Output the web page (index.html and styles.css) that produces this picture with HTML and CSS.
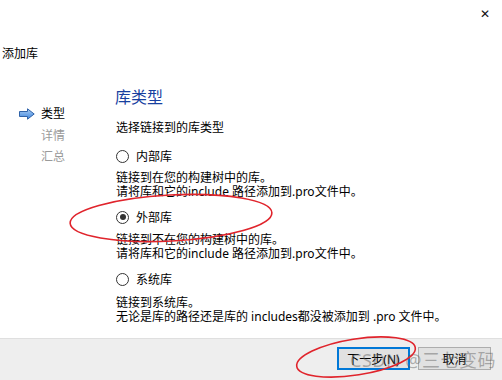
FILE: index.html
```html
<!DOCTYPE html>
<html lang="zh">
<head>
    <meta charset="UTF-8">
    <title>添加库</title>
    <link rel="stylesheet" href="styles.css">
</head>
<body>
    <div class="window">
        <div class="titlebar">
            <span class="close">&#x2715;</span>
        </div>
        <div class="dlg-title">添加库</div>

        <div class="main">
            <ul class="steps">
                <li class="current">
                    <svg class="arrow" width="16" height="12" viewBox="0 0 16 12">
                        <defs>
                            <linearGradient id="ag" x1="0" y1="0" x2="0" y2="1">
                                <stop offset="0" stop-color="#a9cdf5"/>
                                <stop offset="1" stop-color="#3f86dc"/>
                            </linearGradient>
                        </defs>
                        <path d="M0.5 3.5 H8.5 V0.8 L15.2 6 L8.5 11.2 V8.5 H0.5 Z" fill="url(#ag)" stroke="#2f62a8" stroke-width="1"/>
                    </svg>
                    类型
                </li>
                <li>详情</li>
                <li>汇总</li>
            </ul>

            <div class="page">
                <h2>库类型</h2>
                <p class="sub">选择链接到的库类型</p>

                <label class="radio first"><span class="dot"></span>内部库</label>
                <p class="desc">链接到在您的构建树中的库。<br>请将库和它的include 路径添加到.pro文件中。</p>

                <label class="radio"><span class="dot checked"></span>外部库</label>
                <p class="desc">链接到不在您的构建树中的库。<br>请将库和它的include 路径添加到.pro文件中。</p>

                <label class="radio"><span class="dot"></span>系统库</label>
                <p class="desc last">链接到系统库。<br>无论是库的路径还是库的 includes都没被添加到 .pro 文件中。</p>
            </div>
        </div>

        <div class="footer">
            <button class="btn default">下一步(N)</button>
            <button class="btn">取消</button>
        </div>

        <div class="watermark">CSDN @三七变码</div>

        <svg class="marks" width="502" height="380" viewBox="0 0 502 380">
            <ellipse cx="171" cy="218" rx="101" ry="23" transform="rotate(-3 171 218)"/>
            <ellipse cx="356" cy="357" rx="60" ry="18" transform="rotate(-9 356 357)"/>
        </svg>
    </div>
</body>
</html>
```

FILE: styles.css
```css
html, body {
    margin: 0;
    padding: 0;
    background: #fff;
}
body {
    font-family: "Noto Sans", "Noto Sans CJK SC", sans-serif;
    font-size: 12px;
    color: #000;
}
.window {
    position: relative;
    width: 502px;
    height: 380px;
    overflow: hidden;
    display: flex;
    flex-direction: column;
}
.titlebar {
    height: 30px;
    display: flex;
    justify-content: flex-end;
    align-items: center;
    padding-right: 12px;
}
.close {
    font-size: 12px;
    color: #111;
    line-height: 12px;
    margin-top: -2px;
}
.dlg-title {
    margin-top: 17px;
    padding-left: 2px;
    line-height: 14px;
}
.main {
    flex: 1;
    display: flex;
    padding-top: 25px;
}
.steps {
    list-style: none;
    margin: 21px 0 0 0;
    padding: 0 0 0 19px;
    width: 96px;
}
.steps li {
    height: 21.5px;
    line-height: 14px;
    padding-left: 22px;
    color: #9a9a9a;
    position: relative;
}
.steps li.current {
    color: #000;
}
.arrow {
    position: absolute;
    left: 0;
    top: 1px;
}
.page {
    flex: 1;
}
.page h2 {
    margin: 1px 0 0 0;
    font-size: 16px;
    font-weight: normal;
    color: #17409f;
    line-height: 20px;
}
.sub {
    margin: 14px 0 0 1px;
    line-height: 14px;
}
.radio {
    display: flex;
    align-items: center;
    gap: 7px;
    margin: 10px 0 0 1px;
    height: 16px;
}
.radio.first {
    margin-top: 13px;
}
.dot {
    width: 11px;
    height: 11px;
    border: 1px solid #333;
    border-radius: 50%;
    display: flex;
    align-items: center;
    justify-content: center;
}
.dot.checked::after {
    content: "";
    width: 6px;
    height: 6px;
    border-radius: 50%;
    background: #333;
}
.desc {
    margin: 8px 0 0 1px;
    line-height: 14px;
}
.radio.first + .desc {
    margin-top: 7px;
}
.desc.last {
    margin-top: 9px;
}
.footer {
    height: 42px;
    background: #eeeeee;
    border-top: 1px solid #dfdfdf;
    display: flex;
    justify-content: flex-end;
    align-items: flex-start;
    gap: 8px;
    padding: 8px 11px 0 0;
    box-sizing: border-box;
}
.btn {
    width: 73px;
    height: 23px;
    font-family: inherit;
    font-size: 12px;
    background: #e1e1e1;
    border: 1px solid #adadad;
    padding: 0;
    color: #000;
}
.btn.default {
    border: 2px solid #0078d7;
}
.watermark {
    position: absolute;
    left: 350px;
    top: 346px;
    font-size: 18px;
    color: rgba(90, 90, 90, 0.45);
    letter-spacing: 0.5px;
    pointer-events: none;
}
.marks {
    position: absolute;
    left: 0;
    top: 0;
    pointer-events: none;
}
.marks ellipse {
    fill: none;
    stroke: #e0242c;
    stroke-width: 1.6;
}
```
